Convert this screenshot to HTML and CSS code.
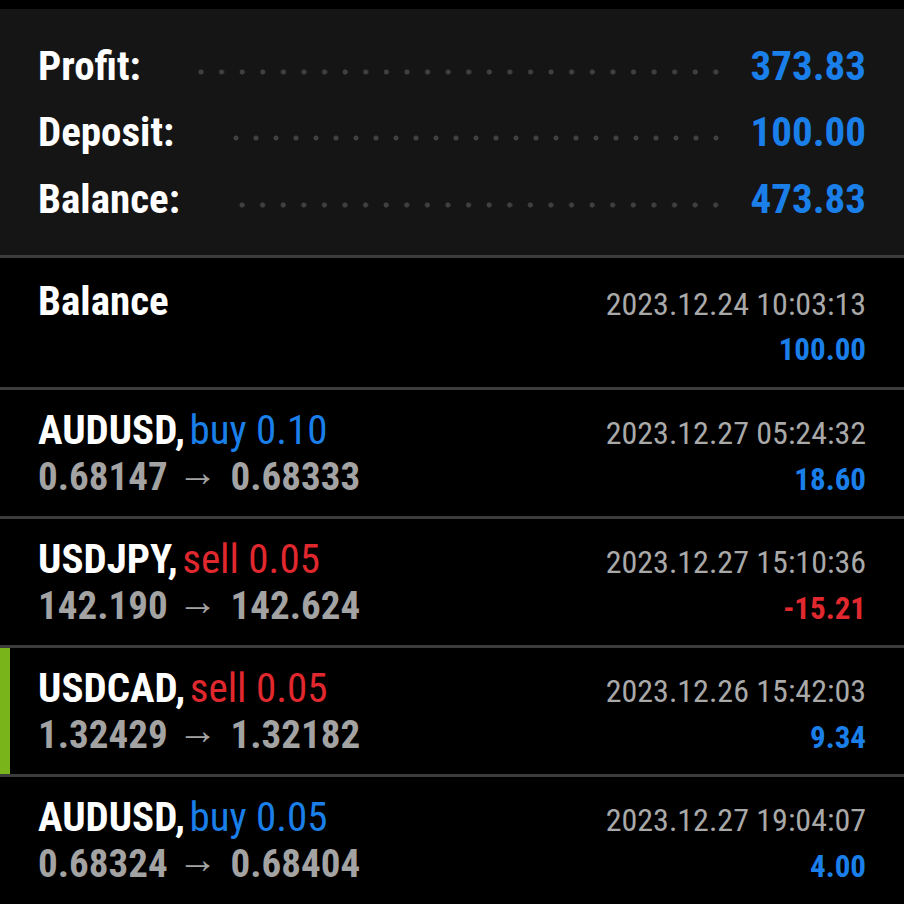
FILE: index.html
```html
<!DOCTYPE html>
<html>
<head>
<meta charset="utf-8">
<link rel="stylesheet" href="styles.css">
</head>
<body>
<div class="strip"></div>
<section class="summary">
  <div class="sum-row"><span class="label">Profit:</span><span class="leader lead-a"></span><span class="amount">373.83</span></div>
  <div class="sum-row"><span class="label">Deposit:</span><span class="leader lead-b"></span><span class="amount">100.00</span></div>
  <div class="sum-row"><span class="label">Balance:</span><span class="leader lead-b"></span><span class="amount">473.83</span></div>
</section>
<ul class="deals">
  <li class="deal first">
    <span class="title">Balance</span><span class="date">2023.12.24 10:03:13</span>
    <span class="prices">&nbsp;</span><span class="value up">100.00</span>
  </li>
  <li class="deal">
    <span class="title">AUDUSD, <span class="op buy">buy 0.10</span></span><span class="date">2023.12.27 05:24:32</span>
    <span class="prices">0.68147 <span class="arrow">→</span> 0.68333</span><span class="value up">18.60</span>
  </li>
  <li class="deal">
    <span class="title">USDJPY, <span class="op sell">sell 0.05</span></span><span class="date">2023.12.27 15:10:36</span>
    <span class="prices">142.190 <span class="arrow">→</span> 142.624</span><span class="value down">-15.21</span>
  </li>
  <li class="deal marked">
    <span class="title">USDCAD, <span class="op sell">sell 0.05</span></span><span class="date">2023.12.26 15:42:03</span>
    <span class="prices">1.32429 <span class="arrow">→</span> 1.32182</span><span class="value up">9.34</span>
  </li>
  <li class="deal">
    <span class="title">AUDUSD, <span class="op buy">buy 0.05</span></span><span class="date">2023.12.27 19:04:07</span>
    <span class="prices">0.68324 <span class="arrow">→</span> 0.68404</span><span class="value up">4.00</span>
  </li>
</ul>
</body>
</html>
```
FILE: styles.css
```css
html, body {
  margin: 0;
  padding: 0;
  background: #000;
}
body {
  width: 904px;
  height: 904px;
  overflow: hidden;
  font-family: "Roboto Condensed", Roboto, sans-serif;
  font-stretch: 85%;
  color: #fff;
}
.strip {
  height: 9px;
  background: #000;
}
.summary {
  height: 246px;
  background: #151515;
  padding: 0 38px;
  box-sizing: border-box;
  display: flex;
  flex-direction: column;
  justify-content: center;
}
.sum-row {
  display: flex;
  align-items: center;
  height: 66.5px;
}
.label {
  font-weight: 700;
  font-size: 41px;
  color: #fff;
}
.amount {
  font-weight: 700;
  font-size: 41px;
  color: #1a7fe9;
}
.leader {
  flex: 1;
  height: 6px;
  margin-top: 12px;
  margin-right: 24px;
  background-image: radial-gradient(circle, #404040 2.2px, transparent 2.9px);
  background-size: 20px 6px;
  background-repeat: space no-repeat;
}
.lead-a { margin-left: 50px; }
.lead-b { margin-left: 52px; }
.deals {
  list-style: none;
  margin: 0;
  padding: 0;
}
.deal {
  display: grid;
  grid-template-columns: 1fr auto;
  grid-template-rows: 40px 46px;
  align-items: baseline;
  line-height: 46px;
  border-top: 3px solid #3c3c3c;
  padding: 20px 38px 0;
  height: 106px;
  box-sizing: content-box;
}
.deal.first {
  grid-template-rows: 43px 46px;
  padding-top: 23px;
  height: 106px;
}
.deal.marked {
  box-shadow: inset 10px 0 0 #79b51a;
}
.title {
  font-weight: 700;
  font-size: 41px;
  line-height: 40px;
  color: #fff;
}
.op {
  font-weight: 400;
  margin-left: -5px;
}
.buy { color: #1a7fe9; }
.sell { color: #e0282e; }
.date {
  font-size: 32px;
  line-height: 40px;
  color: #a9a9a9;
  text-align: right;
}
.prices {
  font-weight: 700;
  font-size: 39px;
  color: #a3a3a3;
}
.arrow {
  display: inline-block;
  font-weight: 400;
  font-size: 40px;
  margin: 0 4px 0 1px;
  vertical-align: 4px;
}
.value {
  font-weight: 700;
  font-size: 31px;
  text-align: right;
}
.up { color: #1a7fe9; }
.down { color: #e0282e; }
```
